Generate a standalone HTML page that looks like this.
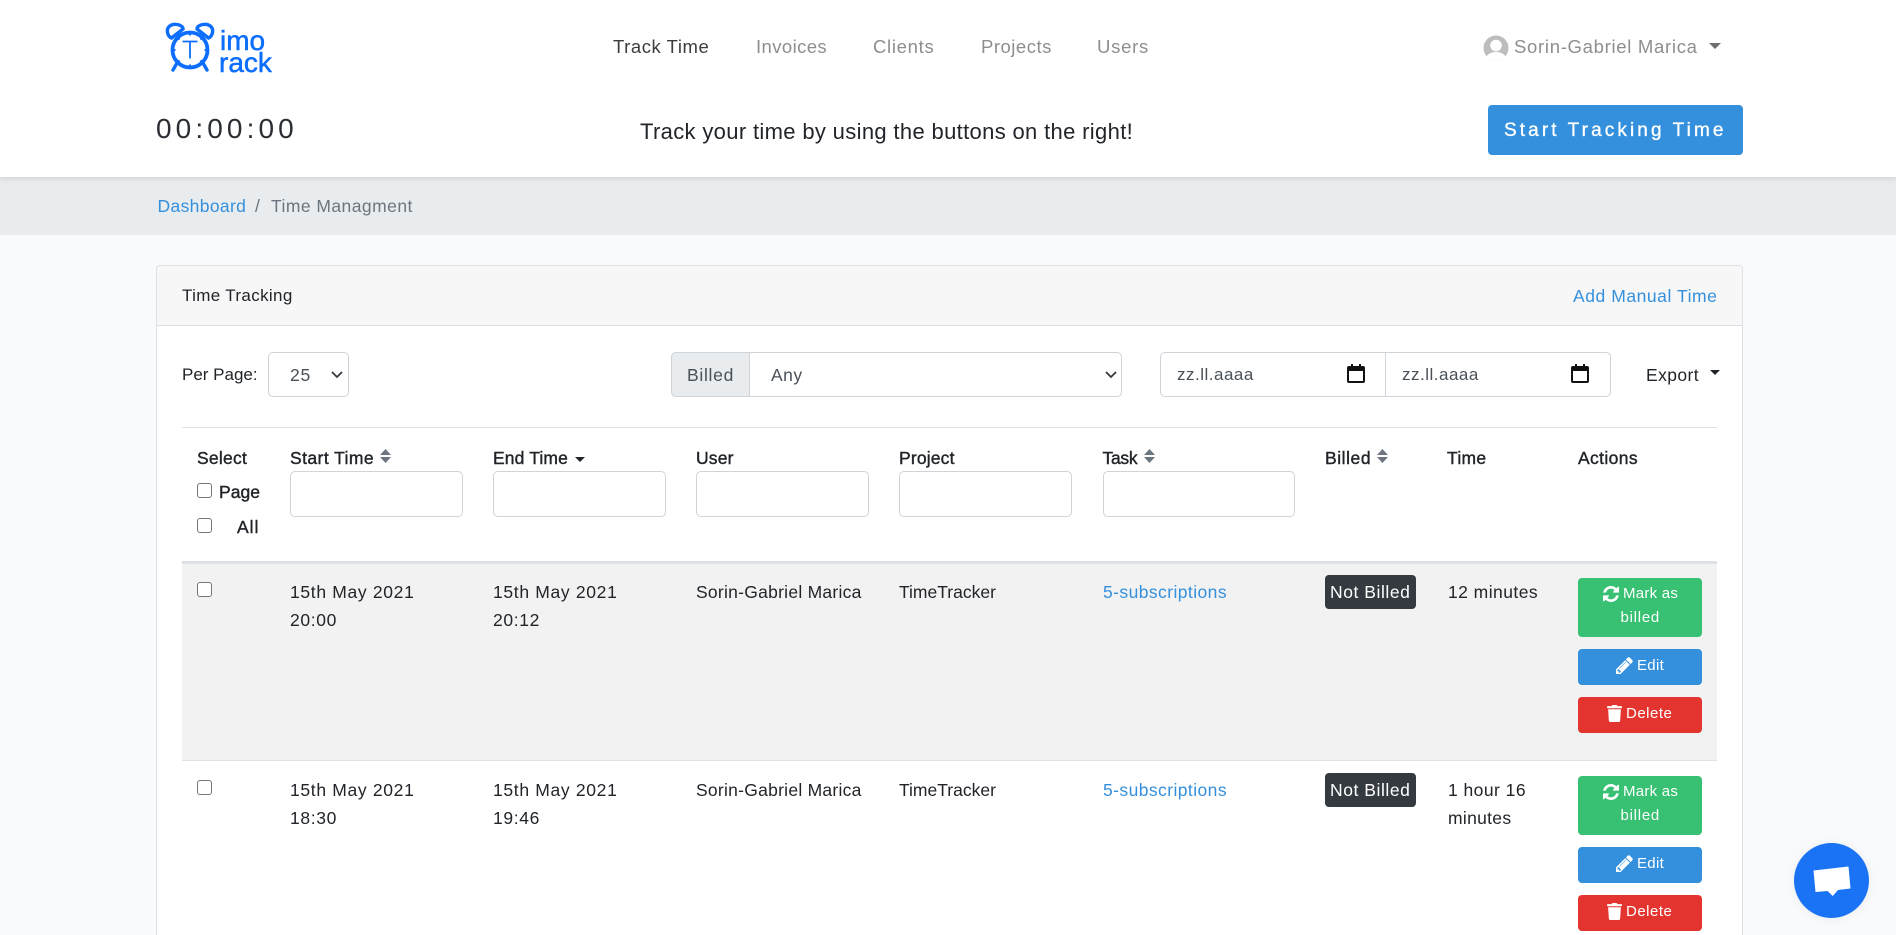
<!DOCTYPE html>
<html lang="en"><head><meta charset="utf-8"><title>Time Tracking</title>
<style>
*{box-sizing:border-box}
html,body{margin:0;padding:0;width:1896px;height:935px;overflow:hidden;background:#f8fafc;font-family:"Liberation Sans",sans-serif;color:#212529}
#p{position:relative;width:1896px;height:935px;overflow:hidden}
.t{position:absolute;white-space:nowrap;line-height:24px;font-size:17.5px}
.b{position:absolute}
.h{-webkit-text-stroke:.4px #212529}
.nav{font-size:18.5px;color:#8e8e8e;top:35px}
.link{color:#3490dc}
.inp{position:absolute;background:#fff;border:1px solid #ced4da;border-radius:5px}
.cb{position:absolute;width:15px;height:15px;border:1px solid #767676;border-radius:3px;background:#fff}
.btn{position:absolute;left:1578px;width:124px;border-radius:4px;color:#fff}
.s{position:absolute;white-space:nowrap;color:#fff;font-size:15px;line-height:20px}
svg{position:absolute;display:block}
</style></head><body><div id="p">
<div class="b" style="left:0;top:0;width:1896px;height:177px;background:#fff;box-shadow:0 2px 5px rgba(0,0,0,.1);z-index:2">
<div class="b" style="left:0;top:94px;width:1896px;height:1px;background:#fcfcfc"></div>
<svg style="left:164px;top:21px" width="54" height="54" viewBox="0 0 54 54" fill="none" stroke="#0d6efd">
<circle cx="26" cy="29" r="17.5" stroke-width="3.8"/>
<path d="M3.500 11.500C2.500 6 7 2.500 13 3.500 17 4 19 6 19 8L7.500 17C5 16 4 14 3.500 11.500Z" stroke-width="3.4"/>
<path d="M48.500 11.500C49.500 6 45 2.500 39 3.500 35 4 33 6 33 8L44.500 17C47 16 48 14 48.500 11.500Z" stroke-width="3.4"/>
<path d="M13 42l-4 7M39 42l4 7" stroke-width="3.4" stroke-linecap="round"/>
<path d="M18.500 20.500h15M26 20.500v17" stroke-width="1.8"/>
<path d="M26 11.500v3M26 43.500v3M8.500 29h3M40.500 29h3M13.600 16.600l2 2M38.400 16.600l-2 2M13.600 41.400l2-2M38.400 41.400l-2-2" stroke-width="2"/>
</svg>
<span class="t" style="left:220px;top:29px;font-size:28px;line-height:24px;color:#0d6efd;-webkit-text-stroke:.5px #0d6efd">imo</span>
<span class="t" style="left:219px;top:51px;font-size:28px;line-height:24px;color:#0d6efd;-webkit-text-stroke:.5px #0d6efd">rack</span>
<span class="t nav" style="left:613px;color:#3c3c3c;letter-spacing:.55px">Track Time</span>
<span class="t nav" style="left:756px;letter-spacing:.4px">Invoices</span>
<span class="t nav" style="left:873px;letter-spacing:.7px">Clients</span>
<span class="t nav" style="left:981px;letter-spacing:.5px">Projects</span>
<span class="t nav" style="left:1097px;letter-spacing:.75px">Users</span>
<svg style="left:1483px;top:35px" width="26" height="26" viewBox="0 0 26 26"><defs><clipPath id="av"><circle cx="13" cy="13" r="12.5"/></clipPath></defs><circle cx="13" cy="13" r="12.5" fill="#bdbdbd"/><g clip-path="url(#av)" fill="#fff"><circle cx="13" cy="10.500" r="5.800"/><path d="M2 27c0-7 5-10 11-10s11 3 11 10z"/></g></svg>
<span class="t nav" style="left:1514px;letter-spacing:.7px">Sorin-Gabriel Marica</span>
<svg style="left:1709px;top:43px" width="12" height="6"><path d="M0 0h12L6 6z" fill="#6f6f6f"/></svg>
<span class="t" style="left:156px;top:117px;font-size:28px;letter-spacing:4.1px;color:#2b2f33">00:00:00</span>
<span class="t" style="left:640px;top:120px;font-size:22px;letter-spacing:.34px">Track your time by using the buttons on the right!</span>
<div class="b" style="left:1488px;top:105px;width:255px;height:50px;background:#3490dc;border-radius:4px"></div>
<span class="t" style="left:1504px;top:119px;font-size:19px;letter-spacing:3.1px;color:#fff;-webkit-text-stroke:.35px #fff">Start Tracking Time</span>
</div>
<div class="b" style="left:0;top:177px;width:1896px;height:58px;background:#e9ecef"></div>
<span class="t link" style="left:157.500px;top:194px;letter-spacing:.35px">Dashboard</span>
<span class="t" style="left:255px;top:194px;color:#6c757d">/</span>
<span class="t" style="left:271px;top:194px;color:#6c757d;letter-spacing:.45px">Time Managment</span>

<div class="b" style="left:156px;top:265px;width:1587px;height:670px;background:#fff;border:1px solid #dcdfe3;border-bottom:none;border-radius:4px 4px 0 0"></div>
<div class="b" style="left:157px;top:266px;width:1585px;height:60px;background:#f7f7f7;border-bottom:1px solid #dcdfe3;border-radius:4px 4px 0 0"></div>
<span class="t" style="left:182px;top:284px;font-size:17px;letter-spacing:.35px">Time Tracking</span>
<span class="t link" style="left:1573px;top:284px;letter-spacing:.55px">Add Manual Time</span>

<span class="t" style="left:182px;top:363px;font-size:17px;letter-spacing:0">Per Page:</span>
<div class="inp" style="left:268px;top:351.500px;width:81px;height:45.500px"></div>
<span class="t" style="left:290px;top:363px;color:#495057;letter-spacing:.8px">25</span>
<svg style="left:331px;top:371px" width="12" height="8" fill="none"><path d="M1 1l5 5 5-5" stroke="#343a40" stroke-width="1.8"/></svg>

<div class="inp" style="left:671px;top:351.500px;width:451px;height:45.500px"></div>
<div class="b" style="left:671px;top:351.500px;width:79px;height:45.500px;background:#e9ecef;border:1px solid #ced4da;border-radius:5px 0 0 5px"></div>
<span class="t" style="left:687px;top:363px;color:#495057;letter-spacing:.7px">Billed</span>
<span class="t" style="left:771px;top:363px;color:#495057;letter-spacing:.5px">Any</span>
<svg style="left:1105px;top:371px" width="12" height="8" fill="none"><path d="M1 1l5 5 5-5" stroke="#343a40" stroke-width="1.8"/></svg>

<div class="inp" style="left:1160px;top:351.500px;width:226px;height:45.500px;border-radius:5px 0 0 5px"></div>
<div class="inp" style="left:1385px;top:351.500px;width:226px;height:45.500px;border-radius:0 5px 5px 0"></div>
<span class="t" style="left:1177px;top:363px;font-size:17px;color:#495057;letter-spacing:.5px">zz.ll.aaaa</span>
<span class="t" style="left:1402px;top:363px;font-size:17px;color:#495057;letter-spacing:.5px">zz.ll.aaaa</span>
<svg style="left:1346px;top:363px" width="20" height="21" viewBox="0 0 20 21"><path d="M5 1h2v2h6V1h2v2h2a2 2 0 0 1 2 2v13a2 2 0 0 1-2 2H3a2 2 0 0 1-2-2V5a2 2 0 0 1 2-2h2zM3 8v10h14V8z" fill="#111"/></svg>
<svg style="left:1570px;top:363px" width="20" height="21" viewBox="0 0 20 21"><path d="M5 1h2v2h6V1h2v2h2a2 2 0 0 1 2 2v13a2 2 0 0 1-2 2H3a2 2 0 0 1-2-2V5a2 2 0 0 1 2-2h2zM3 8v10h14V8z" fill="#111"/></svg>
<span class="t" style="left:1646px;top:362.500px;letter-spacing:.4px">Export</span>
<svg style="left:1710px;top:370px" width="10" height="5"><path d="M0 0h10L5 5z" fill="#212529"/></svg>

<div class="b" style="left:182px;top:427px;width:1535px;height:1px;background:#dee2e6"></div>

<span class="t h" style="left:197px;top:446px;letter-spacing:.25px">Select</span>
<span class="t h" style="left:290px;top:446px;letter-spacing:.43px">Start Time</span>
<span class="t h" style="left:493px;top:446px;letter-spacing:.13px">End Time</span>
<span class="t h" style="left:696px;top:446px;letter-spacing:.15px">User</span>
<span class="t h" style="left:899px;top:446px;letter-spacing:.16px">Project</span>
<span class="t h" style="left:1102.500px;top:446px;letter-spacing:-.3px">Task</span>
<span class="t h" style="left:1325px;top:446px;letter-spacing:.55px">Billed</span>
<span class="t h" style="left:1447px;top:446px;letter-spacing:.28px">Time</span>
<span class="t h" style="left:1578px;top:446px;letter-spacing:.37px">Actions</span>
<svg style="left:380px;top:449px" width="11" height="14"><path d="M5.500 0L11 6H0zM5.500 14L0 8h11z" fill="#6c757d"/></svg>
<svg style="left:575px;top:457px" width="10" height="5"><path d="M0 0h10L5 5z" fill="#212529"/></svg>
<svg style="left:1144px;top:449px" width="11" height="14"><path d="M5.500 0L11 6H0zM5.500 14L0 8h11z" fill="#6c757d"/></svg>
<svg style="left:1377px;top:449px" width="11" height="14"><path d="M5.500 0L11 6H0zM5.500 14L0 8h11z" fill="#6c757d"/></svg>

<div class="cb" style="left:197px;top:483px"></div>
<span class="t h" style="left:219px;top:480px;letter-spacing:.03px">Page</span>
<div class="cb" style="left:197px;top:518px"></div>
<span class="t h" style="left:237px;top:515px;letter-spacing:1px">All</span>

<div class="inp" style="left:290px;top:471px;width:173px;height:46px"></div>
<div class="inp" style="left:493px;top:471px;width:173px;height:46px"></div>
<div class="inp" style="left:696px;top:471px;width:173px;height:46px"></div>
<div class="inp" style="left:899px;top:471px;width:173px;height:46px"></div>
<div class="inp" style="left:1102.500px;top:471px;width:192.500px;height:46px"></div>

<div class="b" style="left:182px;top:561px;width:1535px;height:3px;background:#dee2e6"></div>
<div class="b" style="left:182px;top:564px;width:1535px;height:196px;background:#f2f2f2"></div>
<div class="b" style="left:182px;top:760px;width:1535px;height:1px;background:#dee2e6"></div>

<!-- row 1 -->
<div class="cb" style="left:197px;top:582px"></div>
<span class="t" style="left:290px;top:580px;letter-spacing:.67px">15th May 2021</span>
<span class="t" style="left:290px;top:608px;letter-spacing:.65px">20:00</span>
<span class="t" style="left:493px;top:580px;letter-spacing:.67px">15th May 2021</span>
<span class="t" style="left:493px;top:608px;letter-spacing:.65px">20:12</span>
<span class="t" style="left:696px;top:580px;letter-spacing:.26px">Sorin-Gabriel Marica</span>
<span class="t" style="left:899px;top:580px">TimeTracker</span>
<span class="t link" style="left:1103px;top:580px;letter-spacing:.42px">5-subscriptions</span>
<div class="b" style="left:1325px;top:575px;width:91px;height:34px;background:#343a40;border-radius:4px"></div>
<span class="t" style="left:1330px;top:580px;color:#fff;letter-spacing:.55px">Not Billed</span>
<span class="t" style="left:1448px;top:580px;letter-spacing:.45px">12 minutes</span>
<div class="btn" style="top:578px;height:59px;background:#38c172"></div>
<svg style="left:1603px;top:586px" width="16" height="16" viewBox="128 128 1536 1536"><path fill="#fff" d="M1639 1056q0 5-1 7-64 268-268 434.5t-478 166.5q-146 0-282.5-55t-243.5-157l-129 129q-19 19-45 19t-45-19-19-45v-448q0-26 19-45t45-19h448q26 0 45 19t19 45-19 45l-137 137q71 66 161 102t187 36q134 0 250-65t186-179q11-17 53-117 8-23 30-23h192q13 0 22.5 9.5t9.5 22.5zm25-800v448q0 26-19 45t-45 19h-448q-26 0-45-19t-19-45 19-45l138-138q-148-137-349-137-134 0-250 65t-186 179q-11 17-53 117-8 23-30 23h-199q-13 0-22.5-9.5t-9.5-22.5v-7q65-268 270-434.5t480-166.5q146 0 284 55.5t245 156.500l130-129q19-19 45-19t45 19 19 45z"/></svg>
<span class="s" style="left:1623px;top:584px;letter-spacing:.25px">Mark as</span>
<span class="s" style="left:1620.500px;top:608px;letter-spacing:.75px">billed</span>
<div class="btn" style="top:649px;height:36px;background:#3490dc"></div>
<svg style="left:1616px;top:657px" width="17" height="17" viewBox="128 128 1536 1536"><path fill="#fff" d="M491 1536l91-91-235-235-91 91v107h128v128h107zm523-928q0-22-22-22-10 0-17 7l-542 542q-7 7-7 17 0 22 22 22 10 0 17-7l542-542q7-7 7-17zm-54-192l416 416-832 832h-416v-416zm683 96q0 53-37 90l-166 166-416-416 166-165q36-38 90-38 53 0 91 38l235 234q37 39 37 91z"/></svg>
<span class="s" style="left:1637px;top:656px;letter-spacing:.3px">Edit</span>
<div class="btn" style="top:697px;height:36px;background:#e3342f"></div>
<svg style="left:1607px;top:705px" width="15" height="17" viewBox="0 0 448 512"><path fill="#fff" d="M432 32H312l-9.400-18.700A24 24 0 0 0 281.100 0H166.800a23.720 23.720 0 0 0-21.400 13.300L136 32H16A16 16 0 0 0 0 48v32a16 16 0 0 0 16 16h416a16 16 0 0 0 16-16V48a16 16 0 0 0-16-16zM53.200 467a48 48 0 0 0 47.900 45h245.800a48 48 0 0 0 47.900-45L416 128H32z"/></svg>
<span class="s" style="left:1626px;top:704px;letter-spacing:.5px">Delete</span>

<!-- row 2 -->
<div class="cb" style="left:197px;top:780px"></div>
<span class="t" style="left:290px;top:778px;letter-spacing:.67px">15th May 2021</span>
<span class="t" style="left:290px;top:806px;letter-spacing:.65px">18:30</span>
<span class="t" style="left:493px;top:778px;letter-spacing:.67px">15th May 2021</span>
<span class="t" style="left:493px;top:806px;letter-spacing:.65px">19:46</span>
<span class="t" style="left:696px;top:778px;letter-spacing:.26px">Sorin-Gabriel Marica</span>
<span class="t" style="left:899px;top:778px">TimeTracker</span>
<span class="t link" style="left:1103px;top:778px;letter-spacing:.42px">5-subscriptions</span>
<div class="b" style="left:1325px;top:773px;width:91px;height:34px;background:#343a40;border-radius:4px"></div>
<span class="t" style="left:1330px;top:778px;color:#fff;letter-spacing:.55px">Not Billed</span>
<span class="t" style="left:1448px;top:778px;letter-spacing:.45px">1 hour 16</span>
<span class="t" style="left:1448px;top:806px;letter-spacing:.3px">minutes</span>
<div class="btn" style="top:776px;height:59px;background:#38c172"></div>
<svg style="left:1603px;top:784px" width="16" height="16" viewBox="128 128 1536 1536"><path fill="#fff" d="M1639 1056q0 5-1 7-64 268-268 434.5t-478 166.5q-146 0-282.5-55t-243.5-157l-129 129q-19 19-45 19t-45-19-19-45v-448q0-26 19-45t45-19h448q26 0 45 19t19 45-19 45l-137 137q71 66 161 102t187 36q134 0 250-65t186-179q11-17 53-117 8-23 30-23h192q13 0 22.5 9.5t9.5 22.5zm25-800v448q0 26-19 45t-45 19h-448q-26 0-45-19t-19-45 19-45l138-138q-148-137-349-137-134 0-250 65t-186 179q-11 17-53 117-8 23-30 23h-199q-13 0-22.5-9.5t-9.5-22.5v-7q65-268 270-434.5t480-166.5q146 0 284 55.5t245 156.500l130-129q19-19 45-19t45 19 19 45z"/></svg>
<span class="s" style="left:1623px;top:782px;letter-spacing:.25px">Mark as</span>
<span class="s" style="left:1620.500px;top:806px;letter-spacing:.75px">billed</span>
<div class="btn" style="top:847px;height:36px;background:#3490dc"></div>
<svg style="left:1616px;top:855px" width="17" height="17" viewBox="128 128 1536 1536"><path fill="#fff" d="M491 1536l91-91-235-235-91 91v107h128v128h107zm523-928q0-22-22-22-10 0-17 7l-542 542q-7 7-7 17 0 22 22 22 10 0 17-7l542-542q7-7 7-17zm-54-192l416 416-832 832h-416v-416zm683 96q0 53-37 90l-166 166-416-416 166-165q36-38 90-38 53 0 91 38l235 234q37 39 37 91z"/></svg>
<span class="s" style="left:1637px;top:854px;letter-spacing:.3px">Edit</span>
<div class="btn" style="top:895px;height:36px;background:#e3342f"></div>
<svg style="left:1607px;top:903px" width="15" height="17" viewBox="0 0 448 512"><path fill="#fff" d="M432 32H312l-9.400-18.700A24 24 0 0 0 281.100 0H166.800a23.720 23.720 0 0 0-21.400 13.300L136 32H16A16 16 0 0 0 0 48v32a16 16 0 0 0 16 16h416a16 16 0 0 0 16-16V48a16 16 0 0 0-16-16zM53.200 467a48 48 0 0 0 47.900 45h245.800a48 48 0 0 0 47.900-45L416 128H32z"/></svg>
<span class="s" style="left:1626px;top:902px;letter-spacing:.5px">Delete</span>

<!-- chat -->
<div class="b" style="left:1794px;top:843px;width:75px;height:75px;border-radius:50%;background:#1a73f5;box-shadow:0 1px 10px rgba(0,0,0,.06)"></div>
<svg style="left:1794px;top:843px" width="75" height="75" viewBox="0 0 75 75"><path fill="#fff" d="M19.500 27.500L54.500 23.500 56.500 45.500 44 47 38.800 53 33.500 48 21.500 49z"/></svg>
</div></body></html>
